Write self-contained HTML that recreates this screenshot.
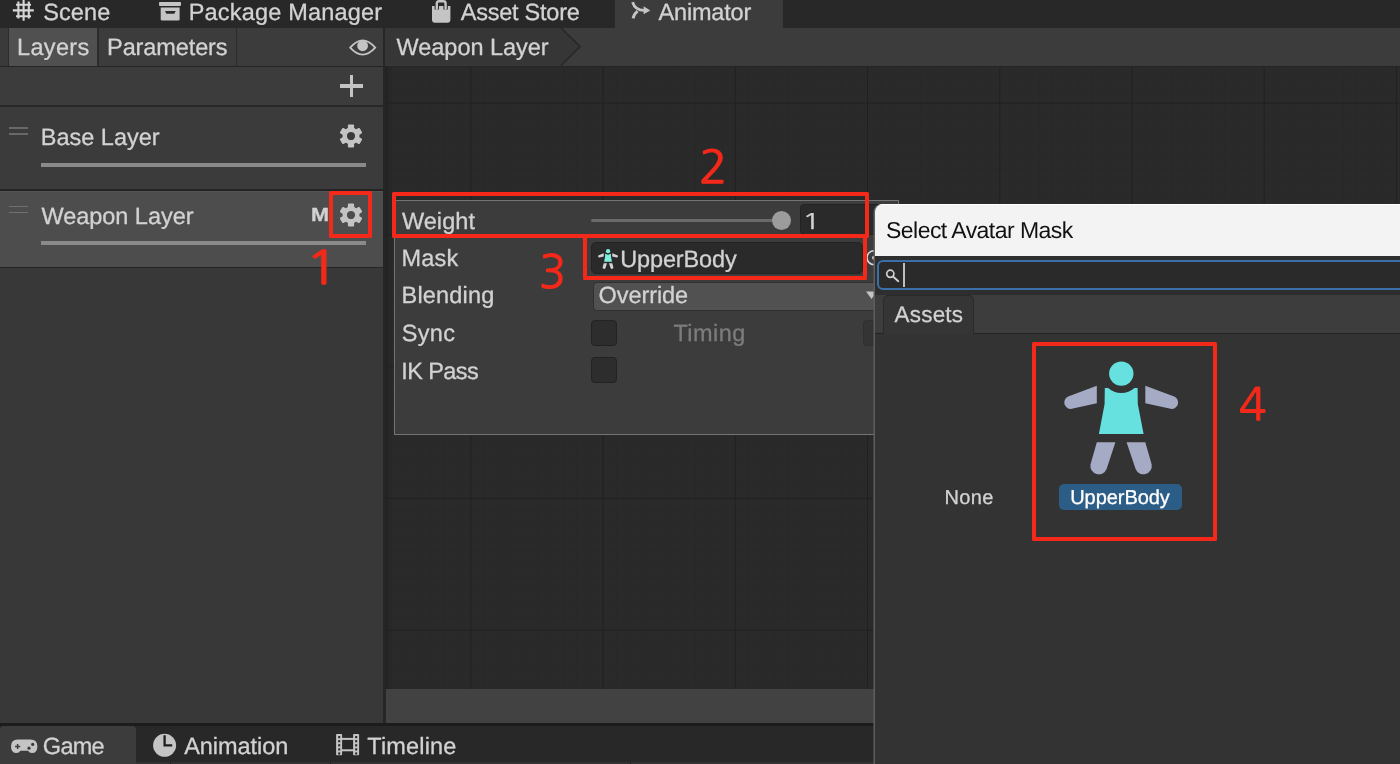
<!DOCTYPE html>
<html lang="en"><head><meta charset="utf-8"><title>Animator - Select Avatar Mask</title>
<style>
html,body{margin:0;padding:0}
body{width:1400px;height:764px;overflow:hidden;background:#282828;position:relative;font-family:"Liberation Sans", sans-serif;}
.a{position:absolute}
.t{position:absolute;white-space:nowrap;line-height:1;margin:0;padding:0;-webkit-text-stroke:0.3px currentColor;text-rendering:geometricPrecision}
#tx{position:absolute;left:0;top:0;width:1400px;height:764px;will-change:transform}
.rb{position:absolute;border:4.2px solid #f4291a;box-sizing:border-box;border-radius:1.5px}
.n{font-family:"NanumGothic", "Liberation Sans", sans-serif;color:#f4291a;-webkit-text-stroke:1.1px #f4291a;transform-origin:0 0}
svg{position:absolute;overflow:visible}
</style></head><body>
<div class="a" style="left:0px;top:0px;width:1400px;height:28px;background:#282828;"></div>
<div class="a" style="left:615px;top:0px;width:168px;height:29px;background:#3c3c3c;"></div>
<div class="a" style="left:0px;top:28px;width:1400px;height:38px;background:#3c3c3c;"></div>
<div class="a" style="left:0px;top:28px;width:8px;height:38px;background:#3a3a3a;"></div>
<div class="a" style="left:7.5px;top:28px;width:1.5px;height:38px;background:#2c2c2c;"></div>
<div class="a" style="left:9px;top:28px;width:88px;height:37.5px;background:#505050;"></div>
<div class="a" style="left:97px;top:28px;width:1.5px;height:38px;background:#2c2c2c;"></div>
<div class="a" style="left:235.5px;top:28px;width:1.5px;height:38px;background:#2c2c2c;"></div>
<svg style="left:385px;top:28px" width="200" height="38" viewBox="0 0 200 38"><path d="M0 0H176L195 18.5L176 37.5H0Z" fill="#363636"/><path d="M176 0L195 18.5L176 37.5" fill="none" stroke="#272727" stroke-width="1.7"/></svg>
<div class="a" style="left:0px;top:65.5px;width:1400px;height:1.5px;background:#252525;"></div>
<div class="a" style="left:0px;top:67px;width:383.5px;height:38px;background:#3c3c3c;"></div>
<div class="a" style="left:0px;top:104.7px;width:383.5px;height:1.8px;background:#272727;"></div>
<div class="a" style="left:0px;top:106.5px;width:383.5px;height:616px;background:#383838;"></div>
<div class="a" style="left:0px;top:106.5px;width:383.5px;height:82px;background:#3b3b3b;"></div>
<div class="a" style="left:0px;top:188.5px;width:383.5px;height:2px;background:#242424;"></div>
<div class="a" style="left:0px;top:190.5px;width:383.5px;height:76px;background:#4d4d4d;"></div>
<div class="a" style="left:0px;top:190.5px;width:383.5px;height:1px;background:#535353;"></div>
<div class="a" style="left:0px;top:266.5px;width:383.5px;height:1.8px;background:#262626;"></div>
<div class="a" id="graph" style="left:383.5px;top:67px;width:491px;height:622px;background-color:#2a2a2a;background-image:linear-gradient(to right,#202020 0,#202020 1.1px,transparent 1.1px),linear-gradient(to bottom,#202020 0,#202020 1.1px,transparent 1.1px),linear-gradient(to right,#282828 0,#282828 1px,transparent 1px),linear-gradient(to bottom,#282828 0,#282828 1px,transparent 1px);background-size:132.2px 132.2px,131.8px 131.8px,13.22px 13.22px,13.18px 13.18px;background-position:86.4px 0,0 35.5px,86.4px 0,0 35.5px"></div>
<div class="a" style="left:1px;top:67px;width:1px;height:0px;background:#000;"></div>
<div class="a" style="left:874px;top:67px;width:526px;height:140px;background-color:#2a2a2a;background-image:linear-gradient(to right,#202020 0,#202020 1.1px,transparent 1.1px),linear-gradient(to bottom,#202020 0,#202020 1.1px,transparent 1.1px),linear-gradient(to right,#282828 0,#282828 1px,transparent 1px),linear-gradient(to bottom,#282828 0,#282828 1px,transparent 1px);background-size:132.2px 132.2px,131.8px 131.8px,13.22px 13.22px,13.18px 13.18px;background-position:-6.9px 0,0 35.5px,-6.9px 0,0 35.5px"></div>
<div class="a" style="left:385.4px;top:67px;width:7px;height:622px;background:linear-gradient(to right,#222222,rgba(34,34,34,0))"></div>
<div class="a" style="left:383.4px;top:28px;width:2px;height:694.5px;background:#262626;"></div>
<div class="a" style="left:385.6px;top:689px;width:488.9px;height:33.5px;background:#424242;"></div>
<div class="a" style="left:0px;top:722.5px;width:874.5px;height:3.5px;background:#1c1c1c;"></div>
<div class="a" style="left:0px;top:726px;width:874.5px;height:38px;background:#282828;"></div>
<div class="a" style="left:0px;top:726px;width:136px;height:38px;background:#3c3c3c;border-radius:4px 4px 0 0;"></div>
<div class="a" style="left:136px;top:761.5px;width:738.5px;height:2.5px;background:#333333;"></div>
<div class="a" style="left:170px;top:761.5px;width:1px;height:2.5px;background:#222;"></div>
<div class="a" style="left:330px;top:761.5px;width:1px;height:2.5px;background:#222;"></div>
<div class="a" style="left:630px;top:761.5px;width:1px;height:2.5px;background:#222;"></div>
<div class="a" style="left:394.2px;top:200.1px;width:504.8px;height:235.3px;background:#3c3c3c;border:1.8px solid #747474;box-sizing:border-box"></div>
<div class="a" style="left:591px;top:219.3px;width:189px;height:3px;background:#6a6a6a;border-radius:1.5px;"></div>
<div class="a" style="left:772px;top:210.8px;width:19px;height:19px;background:#9c9c9c;border-radius:50%;"></div>
<div class="a" style="left:800px;top:204px;width:99px;height:30.5px;background:#2a2a2a;border-radius:4px;border:1px solid #232323;box-sizing:border-box;"></div>
<div class="a" style="left:591px;top:241.5px;width:272px;height:32.5px;background:#2a2a2a;border-radius:5px;border:1px solid #222;box-sizing:border-box;"></div>
<svg style="left:862px;top:246px" width="24" height="24" viewBox="0 0 24 24"><circle cx="12" cy="11.7" r="7" fill="none" stroke="#d8d8d8" stroke-width="1.6"/><circle cx="12" cy="11.7" r="2" fill="#d8d8d8"/></svg>
<div class="a" style="left:592.5px;top:281.5px;width:306.5px;height:29px;background:#515151;border-radius:4px;border:1px solid #303030;box-sizing:border-box;"></div>
<svg style="left:864px;top:289px" width="14" height="12" viewBox="0 0 14 12"><path d="M2 2.5H13L7.5 10Z" fill="#c4c4c4"/></svg>
<div class="a" style="left:591px;top:319.5px;width:26px;height:26px;background:#2d2d2d;border-radius:4px;border:1.2px solid #222;box-sizing:border-box;"></div>
<div class="a" style="left:591px;top:357px;width:26px;height:26px;background:#2d2d2d;border-radius:4px;border:1.2px solid #222;box-sizing:border-box;"></div>
<div class="a" style="left:862.5px;top:319.5px;width:26px;height:26px;background:#343434;border-radius:4px;border:1.2px solid #2f2f2f;box-sizing:border-box;"></div>
<div class="a" style="left:874.5px;top:203.5px;width:526px;height:561px;background:#333333;border-radius:8px 0 0 0;overflow:hidden;box-shadow:-1.5px 0 0 #5e5e5e">
<div class="a" style="left:0;top:0;width:526px;height:52.8px;background:#f3f3f3;border-top:1px solid #fff;box-sizing:border-box"></div>
<div class="a" style="left:0;top:52.8px;width:526px;height:39.2px;background:#2e2e2e"></div>
<div class="a" style="left:2px;top:56.3px;width:540px;height:30.2px;background:#2a2a2a;border:2px solid #3a70aa;border-radius:6px;box-sizing:border-box"></div>
<div class="a" style="left:0;top:91.5px;width:526px;height:38px;background:#3d3d3d"></div>
<div class="a" style="left:0;top:129px;width:526px;height:1.6px;background:#232323"></div>
<div class="a" style="left:8px;top:91.5px;width:91px;height:39.1px;background:#353535;border:1.3px solid #2a2a2a;border-bottom:none;border-radius:5px 5px 0 0;box-sizing:border-box"></div>
<div class="a" style="left:184.2px;top:280.3px;width:123.8px;height:26.2px;background:#2c5d87;border-radius:5px"></div>
</div>
<svg style="left:884px;top:267px" width="18" height="18" viewBox="0 0 18 18"><circle cx="6.3" cy="6.8" r="3.6" fill="none" stroke="#d0d0d0" stroke-width="1.7"/><path d="M9 9.5L14.3 14.2" stroke="#d0d0d0" stroke-width="1.9" stroke-linecap="round"/></svg>
<div class="a" style="left:903px;top:262.8px;width:1.5px;height:24.7px;background:#bdbdbd;"></div>
<svg style="left:1063.5px;top:360.5px" width="114" height="114" viewBox="0 0 114 114"><circle cx="57.3" cy="12.6" r="12.2" fill="#67e0e0"/><path d="M40.8 26.9 L44.2 26.9 A19.4 19.4 0 0 0 70.4 26.9 L73.6 26.9 L73.8 43 L79.6 72.9 L34.9 72.9 L40.6 43 Z" fill="#67e0e0"/><path d="M32.8 24.7 L32.8 42.2 L7.8 47.8 A6.4 6.4 0 0 1 4.2 35.6 Z" fill="#a5abc5"/><path d="M81.3 24.7 L81.3 42.2 L106.6 47.8 A6.4 6.4 0 0 0 110.2 35.6 Z" fill="#a5abc5"/><path d="M32.8 81.3 L51.4 81.3 L42.6 108 A8.4 8.4 0 0 1 26.5 103.6 Z" fill="#a5abc5"/><path d="M62.6 81.3 L81.3 81.3 L87.7 103.6 A8.4 8.4 0 0 1 71.6 108 Z" fill="#a5abc5"/></svg>
<svg style="left:597.5px;top:248.7px" width="20" height="20" viewBox="0 0 114 114"><circle cx="57.3" cy="12.6" r="12.2" fill="#7ff0dc"/><path d="M40.8 26.9 L44.2 26.9 A19.4 19.4 0 0 0 70.4 26.9 L73.6 26.9 L73.8 43 L79.6 72.9 L34.9 72.9 L40.6 43 Z" fill="#7ff0dc"/><path d="M32.8 24.7 L32.8 42.2 L7.8 47.8 A6.4 6.4 0 0 1 4.2 35.6 Z" fill="#d4d4d4"/><path d="M81.3 24.7 L81.3 42.2 L106.6 47.8 A6.4 6.4 0 0 0 110.2 35.6 Z" fill="#d4d4d4"/><path d="M32.8 81.3 L51.4 81.3 L42.6 108 A8.4 8.4 0 0 1 26.5 103.6 Z" fill="#d4d4d4"/><path d="M62.6 81.3 L81.3 81.3 L87.7 103.6 A8.4 8.4 0 0 1 71.6 108 Z" fill="#d4d4d4"/></svg>
<svg style="left:12px;top:0px" width="23" height="22" viewBox="0 0 23 22"><g stroke="#d6d6d6" stroke-width="2.1" fill="none"><path d="M6.4 1.5V18.6M11.6 -1V20.8M16.8 1.5V18.6"/><path d="M4 4.8H19M0.8 10.4H21.8M4 16.3H19"/></g></svg>
<svg style="left:158px;top:0px" width="24" height="22" viewBox="0 0 24 22"><rect x="1" y="2.1" width="22" height="3.8" rx="0.8" fill="#c4c4c4"/><path d="M2.7 7.4H21.6V19.2Q21.6 20.6 20.2 20.6H4.1Q2.7 20.6 2.7 19.2Z" fill="#c4c4c4"/><path d="M7 11.1H17.7L16.3 13.8H8.4Z" fill="#2a2a2a"/></svg>
<svg style="left:430px;top:0px" width="22" height="24" viewBox="0 0 22 24"><path d="M2 6H20.4V19.7Q20.4 22.7 17.4 22.7H5Q2 22.7 2 19.7Z" fill="#c4c4c4"/><path d="M6.8 9.4V6M15.6 9.4V6" fill="none" stroke="#2a2a2a" stroke-width="4.4"/><path d="M6.8 8.5V3.4Q6.8 1.2 9 1.2H13.4Q15.6 1.2 15.6 3.4V8.5" fill="none" stroke="#c4c4c4" stroke-width="2.4" stroke-linecap="round"/></svg>
<svg style="left:630px;top:0px" width="22" height="22" viewBox="0 0 22 22"><path d="M2.6 2.2Q5 10.4 14 10.4" fill="none" stroke="#c4c4c4" stroke-width="2.8"/><path d="M3 18.4Q4 14 7.6 11.2" fill="none" stroke="#c4c4c4" stroke-width="2.8"/><path d="M13.6 6.3L20.3 10.4L13.6 14.3Z" fill="#c4c4c4"/></svg>
<svg style="left:348px;top:38px" width="30" height="20" viewBox="0 0 30 20"><path d="M2.2 9.6Q14.7 -5 27.2 9.6Q14.7 23.5 2.2 9.6Z" fill="none" stroke="#c4c4c4" stroke-width="1.8"/><circle cx="14.6" cy="7.8" r="5.4" fill="#c4c4c4"/></svg>
<div class="a" style="left:340px;top:84.2px;width:23px;height:3.8px;background:#c4c4c4"></div>
<div class="a" style="left:349.6px;top:74.6px;width:3.8px;height:22.5px;background:#c4c4c4"></div>
<svg style="left:338.4px;top:123.3px" width="26" height="26" viewBox="-13 -13 26 26"><g fill="#c4c4c4"><rect x="-3.1" y="-11.4" width="6.2" height="6" rx="1" transform="rotate(0)"/><rect x="-3.1" y="-11.4" width="6.2" height="6" rx="1" transform="rotate(60)"/><rect x="-3.1" y="-11.4" width="6.2" height="6" rx="1" transform="rotate(120)"/><rect x="-3.1" y="-11.4" width="6.2" height="6" rx="1" transform="rotate(180)"/><rect x="-3.1" y="-11.4" width="6.2" height="6" rx="1" transform="rotate(240)"/><rect x="-3.1" y="-11.4" width="6.2" height="6" rx="1" transform="rotate(300)"/></g><circle r="6.3" fill="none" stroke="#c4c4c4" stroke-width="4.4"/></svg>
<svg style="left:338.4px;top:201.8px" width="26" height="26" viewBox="-13 -13 26 26"><g fill="#c4c4c4"><rect x="-3.1" y="-11.4" width="6.2" height="6" rx="1" transform="rotate(0)"/><rect x="-3.1" y="-11.4" width="6.2" height="6" rx="1" transform="rotate(60)"/><rect x="-3.1" y="-11.4" width="6.2" height="6" rx="1" transform="rotate(120)"/><rect x="-3.1" y="-11.4" width="6.2" height="6" rx="1" transform="rotate(180)"/><rect x="-3.1" y="-11.4" width="6.2" height="6" rx="1" transform="rotate(240)"/><rect x="-3.1" y="-11.4" width="6.2" height="6" rx="1" transform="rotate(300)"/></g><circle r="6.3" fill="none" stroke="#c4c4c4" stroke-width="4.4"/></svg>
<svg style="left:10px;top:738px" width="30" height="17" viewBox="0 0 30 17"><path d="M7.8 1.4H20.6Q27.4 1.4 27.4 8.2Q27.4 15.1 22 15.1Q19.3 15.1 18 12.8H10.4Q9.1 15.1 6.4 15.1Q1 15.1 1 8.2Q1 1.4 7.8 1.4Z" fill="#c4c4c4"/><path d="M5 8.5H10.2M7.6 5.9V11.1" stroke="#3c3c3c" stroke-width="1.5"/><circle cx="22.7" cy="6.4" r="1.6" fill="#3c3c3c"/><circle cx="19" cy="10.2" r="1.6" fill="#3c3c3c"/></svg>
<svg style="left:152px;top:733px" width="25" height="25" viewBox="0 0 25 25"><circle cx="12.6" cy="12.3" r="11.5" fill="#c4c4c4"/><path d="M12.6 2.2V12.3H20.2" fill="none" stroke="#1e1e1e" stroke-width="2.3"/></svg>
<svg style="left:336px;top:733.8px" width="23" height="21.4" viewBox="0 0 23 21.4"><rect x="0.1" y="0" width="6" height="21.2" rx="0.8" fill="#c4c4c4"/><rect x="17.1" y="0" width="6" height="21.2" rx="0.8" fill="#c4c4c4"/><rect x="5" y="3.9" width="13" height="2" fill="#c4c4c4"/><rect x="5" y="15.3" width="13" height="2" fill="#c4c4c4"/><rect x="2.2" y="2" width="2" height="2.2" fill="#282828"/><rect x="2.2" y="6.1" width="2" height="2.2" fill="#282828"/><rect x="2.2" y="10.2" width="2" height="2.2" fill="#282828"/><rect x="2.2" y="14.3" width="2" height="2.2" fill="#282828"/><rect x="2.2" y="18.4" width="2" height="2.2" fill="#282828"/><rect x="19.2" y="2" width="2" height="2.2" fill="#282828"/><rect x="19.2" y="6.1" width="2" height="2.2" fill="#282828"/><rect x="19.2" y="10.2" width="2" height="2.2" fill="#282828"/><rect x="19.2" y="14.3" width="2" height="2.2" fill="#282828"/><rect x="19.2" y="18.4" width="2" height="2.2" fill="#282828"/></svg>
<div class="a" style="left:41px;top:162.5px;width:325.3px;height:4px;background:#8a8a8a;"></div>
<div class="a" style="left:41px;top:241px;width:325.3px;height:4px;background:#8a8a8a;"></div>
<div class="a" style="left:9.3px;top:127px;width:18.9px;height:1.8px;background:#686868;"></div>
<div class="a" style="left:9.3px;top:132.9px;width:18.9px;height:1.8px;background:#686868;"></div>
<div class="a" style="left:9.3px;top:205.6px;width:18.9px;height:1.8px;background:#707070;"></div>
<div class="a" style="left:9.3px;top:211.5px;width:18.9px;height:1.8px;background:#707070;"></div>
<div class="rb" style="left:328.8px;top:190.5px;width:43.4px;height:47.5px"></div>
<div class="rb" style="left:392.1px;top:192.1px;width:477.2px;height:45.9px"></div>
<div class="rb" style="left:583.2px;top:233.9px;width:283.5px;height:46px"></div>
<div class="rb" style="left:1031.8px;top:341.8px;width:185.7px;height:199.4px"></div>
<div id="tx">
<span class="t" id="t0" style="left:43.18px;top:1.00px;font-size:23.5px;color:#d2d2d2;font-weight:400;letter-spacing:0.139px">Scene</span>
<span class="t" id="t1" style="left:188.71px;top:1.00px;font-size:23.5px;color:#d2d2d2;font-weight:400;letter-spacing:0.186px">Package Manager</span>
<span class="t" id="t2" style="left:460.77px;top:1.00px;font-size:23.5px;color:#d2d2d2;font-weight:400;letter-spacing:-0.241px">Asset Store</span>
<span class="t" id="t3" style="left:658.53px;top:1.00px;font-size:23.5px;color:#d2d2d2;font-weight:400;letter-spacing:-0.176px">Animator</span>
<span class="t" id="t4" style="left:17.06px;top:36.00px;font-size:23.5px;color:#d2d2d2;font-weight:400;letter-spacing:0.328px">Layers</span>
<span class="t" id="t5" style="left:107.09px;top:36.00px;font-size:23.5px;color:#d2d2d2;font-weight:400;letter-spacing:-0.105px">Parameters</span>
<span class="t" id="t6" style="left:396.61px;top:36.00px;font-size:23.5px;color:#d2d2d2;font-weight:400;letter-spacing:-0.049px">Weapon Layer</span>
<span class="t" id="t7" style="left:40.74px;top:126.00px;font-size:23.5px;color:#d2d2d2;font-weight:400;letter-spacing:0.006px">Base Layer</span>
<span class="t" id="t8" style="left:41.48px;top:205.00px;font-size:23.5px;color:#d2d2d2;font-weight:400;letter-spacing:-0.036px">Weapon Layer</span>
<span class="t" id="t9" style="left:311.02px;top:207.00px;font-size:18.9px;color:#d2d2d2;font-weight:700;letter-spacing:0.000px;transform-origin:0 0;transform:scaleX(1.147)">M</span>
<span class="t" id="t10" style="left:401.91px;top:210.00px;font-size:23.5px;color:#d2d2d2;font-weight:400;letter-spacing:0.062px">Weight</span>
<span class="t" id="t11" style="left:401.52px;top:247.00px;font-size:23.5px;color:#d2d2d2;font-weight:400;letter-spacing:0.215px">Mask</span>
<span class="t" id="t12" style="left:401.52px;top:284.00px;font-size:23.5px;color:#d2d2d2;font-weight:400;letter-spacing:0.201px">Blending</span>
<span class="t" id="t13" style="left:401.64px;top:322.00px;font-size:23.5px;color:#d2d2d2;font-weight:400;letter-spacing:0.400px">Sync</span>
<span class="t" id="t14" style="left:401.33px;top:360.00px;font-size:23.5px;color:#d2d2d2;font-weight:400;letter-spacing:-0.612px">IK Pass</span>
<span class="t" id="t15" style="left:620.25px;top:248.00px;font-size:23.5px;color:#d2d2d2;font-weight:400;letter-spacing:-0.149px">UpperBody</span>
<span class="t" id="t16" style="left:598.59px;top:284.00px;font-size:23.5px;color:#d2d2d2;font-weight:400;letter-spacing:-0.079px">Override</span>
<span class="t" id="t17" style="left:673.46px;top:322.00px;font-size:23.5px;color:#7c7c7c;font-weight:400;letter-spacing:0.432px">Timing</span>
<span class="t" id="t18" style="left:802.01px;top:212.00px;font-size:21.5px;color:#d2d2d2;font-weight:400;letter-spacing:0.000px;transform-origin:0 0;transform:scaleX(1.447);font-family:'NanumGothic', 'Liberation Sans', sans-serif">1</span>
<span class="t" id="t19" style="left:886.09px;top:219.00px;font-size:23px;color:#111111;font-weight:400;letter-spacing:-0.548px;-webkit-text-stroke:0">Select Avatar Mask</span>
<span class="t" id="t20" style="left:894.54px;top:304.00px;font-size:22.4px;color:#d2d2d2;font-weight:400;letter-spacing:0.264px">Assets</span>
<span class="t" id="t21" style="left:944.44px;top:488.00px;font-size:20px;color:#d2d2d2;font-weight:400;letter-spacing:0.413px">None</span>
<span class="t" id="t22" style="left:1070.19px;top:488.00px;font-size:20px;color:#ffffff;font-weight:400;letter-spacing:-0.050px">UpperBody</span>
<span class="t" id="t23" style="left:42.85px;top:735.00px;font-size:23.5px;color:#d2d2d2;font-weight:400;letter-spacing:-0.729px">Game</span>
<span class="t" id="t24" style="left:184.14px;top:735.00px;font-size:23.5px;color:#d2d2d2;font-weight:400;letter-spacing:-0.050px">Animation</span>
<span class="t" id="t25" style="left:367.22px;top:735.00px;font-size:23.5px;color:#d2d2d2;font-weight:400;letter-spacing:0.185px">Timeline</span>
<span class="t n" id="n0" style="left:305.07px;top:245.00px;font-size:46.13px;transform:scaleX(1.223)">1</span>
<span class="t n" id="n1" style="left:698.98px;top:145.00px;font-size:45.13px;transform:scaleX(1.038)">2</span>
<span class="t n" id="n2" style="left:538.94px;top:250.00px;font-size:45.71px;transform:scaleX(0.977)">3</span>
<span class="t n" id="n3" style="left:1239.29px;top:383.00px;font-size:44.40px;transform:scaleX(1.020)">4</span>
</div>
</body></html>
